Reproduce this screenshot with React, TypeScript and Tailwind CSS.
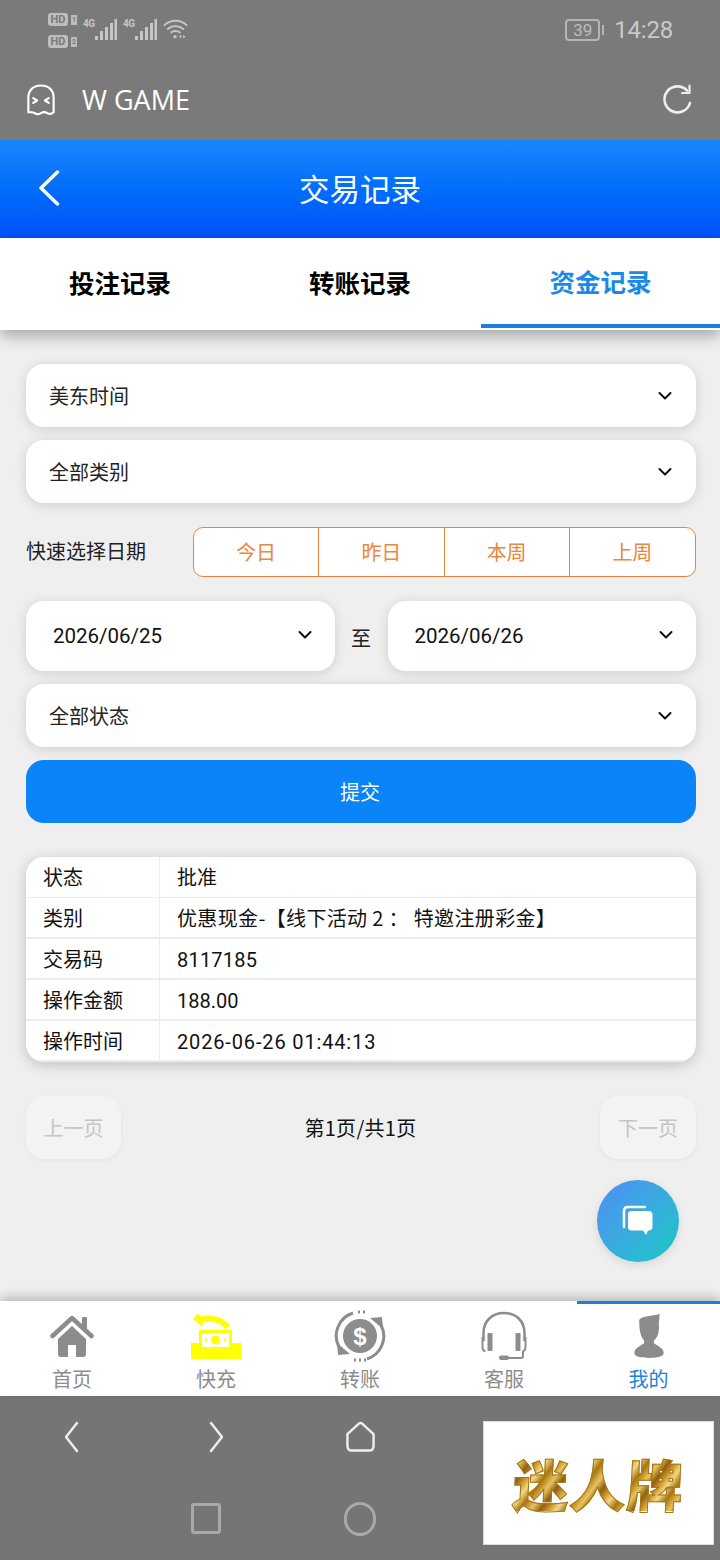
import React from 'react';

const FONT = "font-['Noto_Sans_CJK_SC','Noto_Sans',sans-serif]";
const LATIN = "font-['Roboto',sans-serif]";

function Chevron() {
  return (
    <svg viewBox="0 0 14 10" className="w-[14px] h-[10px]" fill="none" stroke="#111" strokeWidth="2" strokeLinecap="round" strokeLinejoin="round">
      <path d="M1.5 2 7 7.5 12.5 2" />
    </svg>
  );
}

function Signal() {
  return (
    <svg viewBox="0 0 22 21" className="w-[22px] h-[21px]" fill="#c6c6c6">
      <rect x="0" y="17" width="3" height="4" />
      <rect x="5" y="12" width="3" height="9" />
      <rect x="10" y="8" width="3" height="13" />
      <rect x="15" y="4" width="3" height="17" />
      <rect x="19.500" y="0" width="2.500" height="21" />
    </svg>
  );
}

function Hd({ n }: { n: string }) {
  return (
    <div className="flex items-center gap-[3px]">
      <span className="w-[20px] h-[13px] rounded-[3px] bg-[#bdbdbd] text-[#7a7a7a] text-[11px] leading-[13px] font-bold text-center">HD</span>
      <span className="w-[6px] h-[10px] bg-[#bdbdbd] text-[#7a7a7a] text-[7px] leading-[10px] font-bold text-center">{n}</span>
    </div>
  );
}

function StatusBar() {
  return (
    <div className={`h-[70px] shrink-0 bg-[#7a7a7a] flex items-start justify-between pl-[48px] pr-[47px] pt-[12px] ${LATIN}`}>
      <div className="flex items-start gap-[6px]">
        <div className="flex flex-col gap-[9px] pt-[1px]">
          <Hd n="1" />
          <Hd n="2" />
        </div>
        <div className="flex items-start pt-[6px] w-[34px]">
          <span className="w-[12px] text-[10px] leading-[12px] font-bold text-[#c6c6c6] tracking-[-0.5px]">4G</span>
          <div className="mt-[1px]"><Signal /></div>
        </div>
        <div className="flex items-start pt-[6px] w-[34px]">
          <span className="w-[12px] text-[10px] leading-[12px] font-bold text-[#c6c6c6] tracking-[-0.5px]">4G</span>
          <div className="mt-[1px]"><Signal /></div>
        </div>
        <svg viewBox="0 0 26 22" className="w-[25px] h-[22px] mt-[6px]" fill="none" stroke="#c6c6c6" strokeWidth="2" strokeLinecap="round">
          <path d="M1.500 7C8 1 18 1 24.500 7" />
          <path d="M5 11c4.500-4 11.500-4 16 0" />
          <path d="M8.500 14.500c2.500-2 6.500-2 9 0" />
          <circle cx="12.500" cy="19" r="1.800" fill="#c6c6c6" stroke="none" />
          <path d="M19 17v4l-2.500-2zM21 17v4l2.500-2z" fill="#c6c6c6" stroke="none" />
        </svg>
      </div>
      <div className="flex items-center gap-[10px] mt-[5px]">
        <div className="flex items-center gap-[2px]">
          <div className="w-[35px] h-[22px] rounded-[4px] border-2 border-[#b5b5b5] flex items-center justify-center text-[#bdbdbd] text-[17px] leading-none">
            39
          </div>
          <div className="w-[2px] h-[10px] bg-[#b5b5b5]" />
        </div>
        <span className="text-[24px] leading-[26px] text-[#c9c9c9] tracking-[-0.2px]">14:28</span>
      </div>
    </div>
  );
}

function AppBar() {
  return (
    <div className="h-[70px] shrink-0 bg-[#7a7a7a] flex items-center justify-between pl-[26px] pr-[27px] pb-[10px]">
      <div className="flex items-center gap-[26px]">
        <svg viewBox="0 0 30 34" className="w-[30px] h-[33px]" fill="none" stroke="#fff" strokeWidth="2.200" strokeLinecap="round" strokeLinejoin="round">
          <path d="M2 29V14C2 6 7.500 1.500 15 1.500S28 6 28 14v15c-2.500 2.500-4 2.500-6.500 1s-4-1.500-6.500 0-4.500 1.500-6.500 0S4 29.500 2 29Z" />
          <path d="M7 14.500l4 2.500-4 2.500M23 14.500l-4 2.500 4 2.500" />
        </svg>
        <span className="text-[27px] leading-[34px] text-white font-['Open_Sans',sans-serif]">W GAME</span>
      </div>
      <svg viewBox="0 0 30 32" className="w-[30px] h-[32px] -translate-x-[1px]" fill="none" stroke="#eee" strokeWidth="2.600" strokeLinecap="round" strokeLinejoin="round">
        <path d="M25 6.500A13 13 0 1 0 28 19" />
        <path d="M27.500 1.500V9h-7.500" strokeWidth="2.200" />
      </svg>
    </div>
  );
}

function BlueHeader() {
  return (
    <div className="h-[98px] shrink-0 bg-gradient-to-b from-[#1a86fb] to-[#0050fb] flex items-center relative">
      <svg viewBox="0 0 22 36" className="w-[22px] h-[36px] ml-[38px] mb-[2px]" fill="none" stroke="#fff" strokeWidth="3.400" strokeLinecap="round" strokeLinejoin="round">
        <path d="M19.500 2 3 18l16.500 16" />
      </svg>
      <div className="flex-1 text-center text-[30.500px] leading-[40px] text-white pr-[60px] mb-[2px]">交易记录</div>
    </div>
  );
}

function Tabs() {
  const tabs = ['投注记录', '转账记录', '资金记录'];
  return (
    <div className="h-[92px] shrink-0 bg-white grid grid-cols-3 shadow-[0_6px_14px_rgba(0,0,0,0.3)] relative z-10">
      {tabs.map((t, i) => (
        <div
          key={t}
          className={`flex items-center justify-center text-[25.500px] font-bold pb-[2px] mb-[2px] ${
            i === 2 ? 'text-[#1a8ae6] border-b-[4px] border-[#1a7fdc] pt-[2px] ml-[1px]' : 'text-black'
          }`}
        >
          {t}
        </div>
      ))}
    </div>
  );
}

function Select({ label }: { label: string }) {
  return (
    <div className="h-[63px] bg-white rounded-[18px] shadow-[0_2px_12px_rgba(0,0,0,0.14)] flex items-center justify-between pl-[23px] pr-[24px]">
      <span className="text-[20px] text-[#222]">{label}</span>
      <Chevron />
    </div>
  );
}

function DateBox({ value }: { value: string }) {
  return (
    <div className="flex-1 h-[70px] bg-white rounded-[18px] shadow-[0_2px_12px_rgba(0,0,0,0.14)] flex items-center justify-between pl-[27px] pr-[23px]">
      <span className={`text-[20.500px] text-[#111] pt-[1px] ${LATIN}`}>{value}</span>
      <div className="mb-[3px]"><Chevron /></div>
    </div>
  );
}

function QuickDates() {
  const items = ['今日', '昨日', '本周', '上周'];
  return (
    <div className="flex items-center justify-between mt-[24px] mb-[24px]">
      <span className="text-[20px] text-[#222] mb-[2px]">快速选择日期</span>
      <div className="w-[503px] h-[50px] grid grid-cols-4 bg-white border border-[#e8843c] rounded-[10px] divide-x divide-[#e8843c]">
        {items.map(t => (
          <div key={t} className="flex items-center justify-center text-[20px] text-[#e8873f]">{t}</div>
        ))}
      </div>
    </div>
  );
}

function ResultTable() {
  const rows = [
    ['状态', '批准', ''],
    ['类别', '优惠现金-【线下活动 2 ： 特邀注册彩金】', 'tracking-[0.35px]'],
    ['交易码', '8117185', `tracking-[0.2px] pt-[2px] ${LATIN}`],
    ['操作金额', '188.00', `pt-[2px] ${LATIN}`],
    ['操作时间', '2026-06-26 01:44:13', `tracking-[0.85px] pt-[2px] ${LATIN}`],
  ];
  return (
    <div className="mt-[34px] h-[205px] bg-white rounded-[18px] overflow-hidden shadow-[0_3px_14px_rgba(0,0,0,0.2)]">
      {rows.map(([k, v, extra], i) => (
        <div key={k} className={`flex h-[41px] ${i === 0 ? 'border-b border-[#ececec]' : 'border-b-2 border-[#ececec]'}`}>
          <div className="w-[134px] shrink-0 border-r border-[#ececec] pl-[17px] flex items-center text-[20px] text-[#111]">{k}</div>
          <div className={`pl-[17px] flex items-center text-[20px] text-[#111] whitespace-pre ${extra}`}>{v}</div>
        </div>
      ))}
    </div>
  );
}

function Pagination() {
  return (
    <div className="mt-[34px] flex items-center justify-between">
      <div className="w-[95px] h-[63px] rounded-[18px] bg-[#f3f3f3] shadow-[0_1px_4px_rgba(0,0,0,0.05)] flex items-center justify-center text-[20px] text-[#c4c4c4]">上一页</div>
      <span className="text-[20px] text-[#111] tracking-[0.3px]">第1页/共1页</span>
      <div className="w-[96px] h-[63px] rounded-[18px] bg-[#f3f3f3] shadow-[0_1px_4px_rgba(0,0,0,0.05)] flex items-center justify-center text-[20px] text-[#c4c4c4]">下一页</div>
    </div>
  );
}

function HomeIcon() {
  return (
    <svg viewBox="0 0 44 44" className="w-[44px] h-[44px]" fill="#8c8c8c">
      <path d="M8 25 22 12l14 13v15c0 2-1 3-3 3h-7V31h-8v12h-7c-2 0-3-1-3-3Z" />
      <path d="M2.500 22 22 4l19.500 18" fill="none" stroke="#8c8c8c" strokeWidth="4.500" strokeLinecap="round" strokeLinejoin="round" />
      <rect x="32" y="3" width="5" height="13" rx="1" />
    </svg>
  );
}

function RechargeIcon() {
  return (
    <svg viewBox="0 0 50 46" className="w-[50px] h-[46px]" fill="#ffff00">
      <path d="M7 0 2 6l9 8 1-5z" />
      <path d="M9 6.500C18 4 31 6 36.500 14.500" fill="none" stroke="#ffff00" strokeWidth="6" />
      <rect x="8" y="17" width="33" height="20" />
      <rect x="11" y="20" width="27" height="14" fill="#fff" />
      <circle cx="24.500" cy="27" r="4.500" />
      <circle cx="15" cy="27" r="1.500" />
      <circle cx="34" cy="27" r="1.500" />
      <path d="M0 30h8v6h33v-6h9v16H0Z" />
    </svg>
  );
}

function TransferIcon() {
  return (
    <svg viewBox="0 0 52 52" className="w-[52px] h-[52px]">
      <circle cx="26" cy="26" r="17" fill="#8c8c8c" />
      <text x="26" y="34.500" textAnchor="middle" fontSize="24" fontWeight="700" fill="#fff" fontFamily="Liberation Sans, sans-serif">$</text>
      <path d="M5 37A24 24 0 0 1 19 3" fill="none" stroke="#8c8c8c" strokeWidth="3" />
      <path d="M47 15a24 24 0 0 1-14 34" fill="none" stroke="#8c8c8c" strokeWidth="3" />
      <path d="M3 33 4 45l12-1z" fill="#8c8c8c" />
      <path d="M49 19 48 7 36 8z" fill="#8c8c8c" />
      <path d="M24 2h2M29 2h2M20 50h2M25 50h2M30 50h2" stroke="#8c8c8c" strokeWidth="3" />
    </svg>
  );
}

function HeadsetIcon() {
  return (
    <svg viewBox="0 0 46 50" className="w-[46px] h-[50px]" fill="none" stroke="#8c8c8c" strokeWidth="2.500">
      <path d="M2.500 30V22C2.500 10 11 2 23 2s20.500 8 20.500 20v8" />
      <rect x="6.500" y="22" width="5" height="18" rx="1" fill="#8c8c8c" stroke="none" />
      <rect x="34.500" y="22" width="5" height="18" rx="1" fill="#8c8c8c" stroke="none" />
      <path d="M1.500 26v10c0 2 1 4 3 4M44.500 26v10c0 2-1 4-3 4" strokeWidth="2" />
      <path d="M42 40v5c0 1-1 2-2 2H24" strokeWidth="2" />
      <rect x="18" y="44.500" width="10" height="4.500" rx="2" fill="#8c8c8c" stroke="none" />
    </svg>
  );
}

function PersonIcon() {
  return (
    <svg viewBox="0 0 30 45" className="w-[30px] h-[44px]" fill="#8c8c8c">
      <path d="M5 6C8 2 18 2 26 0l-1 10c1 8-1 14-5 17v3c4 3 10 5 10 10 0 4-8 5-15 5S0 44 0 40c0-5 6-7 10-10v-3C6 23 5 16 5 6Z" />
    </svg>
  );
}

function BottomNav() {
  const items: { label: string; icon: React.ReactNode; active?: boolean }[] = [
    { label: '首页', icon: <HomeIcon /> },
    { label: '快充', icon: <RechargeIcon /> },
    { label: '转账', icon: <TransferIcon /> },
    { label: '客服', icon: <HeadsetIcon /> },
    { label: '我的', icon: <PersonIcon />, active: true },
  ];
  return (
    <div className="h-[95px] shrink-0 bg-white grid grid-cols-5 shadow-[0_-4px_10px_rgba(0,0,0,0.22)] relative z-10">
      {items.map(item => (
        <div
          key={item.label}
          className={`flex flex-col items-center ${item.active ? 'border-t-[3px] border-[#1f7fd6] pt-[6px] ml-[1px]' : 'pt-[9px]'}`}
        >
          <div className="h-[52px] flex items-center justify-center">{item.icon}</div>
          <span className={`text-[20px] leading-[28px] mt-[3px] ${item.active ? 'text-[#1a84d8]' : 'text-[#8c8c8c]'}`}>{item.label}</span>
        </div>
      ))}
    </div>
  );
}

function SystemNav() {
  return (
    <div className="h-[164px] shrink-0 bg-[#757575] relative">
      <div className="grid grid-cols-5 pt-[25px]">
        <div className="flex justify-center">
          <svg viewBox="0 0 16 32" className="w-[16px] h-[32px] -translate-x-[1px]" fill="none" stroke="#eee" strokeWidth="2.500" strokeLinecap="round" strokeLinejoin="round">
            <path d="M14 2 3 16l11 14" />
          </svg>
        </div>
        <div className="flex justify-center">
          <svg viewBox="0 0 16 32" className="w-[16px] h-[32px] translate-x-[1px]" fill="none" stroke="#eee" strokeWidth="2.500" strokeLinecap="round" strokeLinejoin="round">
            <path d="M2 2l11 14L2 30" />
          </svg>
        </div>
        <div className="flex justify-center">
          <svg viewBox="0 0 32 32" className="w-[31px] h-[32px]" fill="none" stroke="#eee" strokeWidth="2.500" strokeLinejoin="round">
            <path d="M2.500 13 14 2.500c1.200-1 2.800-1 4 0L29.500 13v12c0 3-1.500 5-4.500 5H7c-3 0-4.500-2-4.500-5Z" />
          </svg>
        </div>
      </div>
      <div className="grid grid-cols-5 mt-[50px]">
        <div />
        <div className="flex justify-center">
          <div className="w-[30px] h-[31px] rounded-[3px] border-[3px] border-[#a9a9a9] -translate-x-[10px]" />
        </div>
        <div className="flex justify-center">
          <div className="w-[32px] h-[34px] rounded-full border-[3px] border-[#a9a9a9] -translate-y-[1px]" />
        </div>
      </div>
      <div className="absolute left-[483px] top-[25px] w-[231px] h-[124px] bg-white flex items-center justify-center border border-[#dcdcdc]">
        <span className="text-[56px] leading-none font-black -skew-x-3 tracking-[1px] [-webkit-text-stroke:1px_#a87416] bg-[repeating-linear-gradient(125deg,#a8740f_0px,#e9c45f_9px,#8f5f0c_17px,#d9a63a_25px,#f0d88a_30px,#a8740f_38px)] bg-clip-text text-transparent">迷人牌</span>
      </div>
    </div>
  );
}

export default function App() {
  return (
    <div className={`w-[720px] h-[1560px] flex flex-col overflow-hidden relative bg-[#efefef] ${FONT}`}>
      <StatusBar />
      <AppBar />
      <BlueHeader />
      <Tabs />
      <div className="flex-1 pl-[26px] pr-[24px] pt-[34px] relative">
        <Select label="美东时间" />
        <div className="mt-[13px]"><Select label="全部类别" /></div>
        <QuickDates />
        <div className="flex items-center">
          <DateBox value="2026/06/25" />
          <span className="w-[53px] text-center text-[20px] text-[#222] pt-[4px]">至</span>
          <DateBox value="2026/06/26" />
        </div>
        <div className="mt-[13px]"><Select label="全部状态" /></div>
        <div className="mt-[13px] h-[63px] rounded-[18px] bg-[#0a84f6] flex items-center justify-center text-[20px] text-white pr-[2px]">提交</div>
        <ResultTable />
        <Pagination />
        <div className="absolute left-[597px] top-[850px] w-[82px] h-[82px] rounded-full bg-gradient-to-br from-[#4d8df5] to-[#0fc7c4] shadow-[0_3px_10px_rgba(0,0,0,0.1)] flex items-center justify-center">
          <svg viewBox="0 0 32 32" className="w-[32px] h-[32px]">
            <path d="M2 22V6c0-2 1-4 4-4h17" fill="none" stroke="#fff" strokeWidth="2.500" strokeLinecap="round" />
            <path d="M9 6h18c2 0 3.500 1.500 3.500 3.500V22c0 2-1.500 3.500-3.500 3.500h-1L24 30l-3-4.500H9c-2 0-3-1.500-3-3.500V9.500C6 7.500 7 6 9 6Z" fill="#fff" />
          </svg>
        </div>
      </div>
      <BottomNav />
      <SystemNav />
    </div>
  );
}
